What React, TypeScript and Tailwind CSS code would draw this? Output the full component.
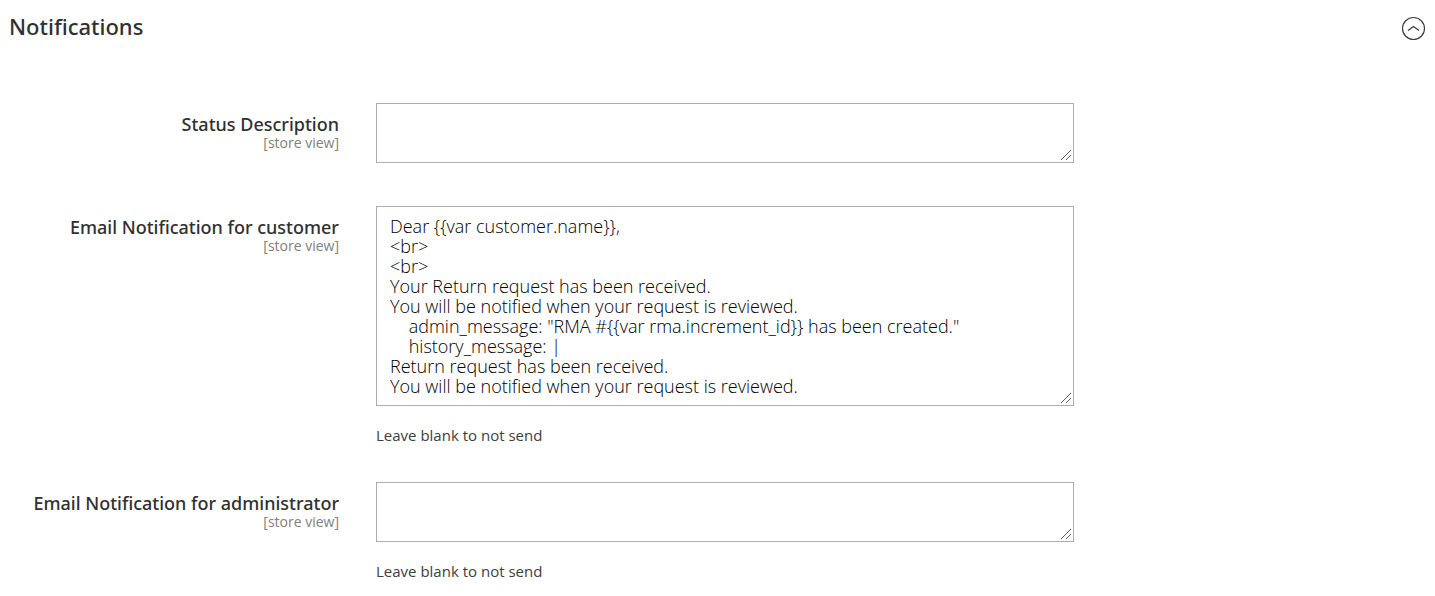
const customerMessage = `Dear {{var customer.name}},
<br>
<br>
Your Return request has been received.
You will be notified when your request is reviewed.
    admin_message: "RMA #{{var rma.increment_id}} has been created."
    history_message: |
Return request has been received.
You will be notified when your request is reviewed.`;

type FieldProps = {
  id: string;
  label: string;
  rows: number;
  value?: string;
  note?: string;
};

function Field({ id, label, rows, value = "", note }: FieldProps) {
  return (
    <div className="flex gap-[37px]">
      <label htmlFor={id} className="w-[339px] shrink-0 pt-[11px] text-right">
        <span className="block font-['Noto_Sans','Open_Sans',sans-serif] text-[18px] leading-5 font-medium">{label}</span>
        <span className="block text-sm leading-[17px] text-[#808080]">[store view]</span>
      </label>
      <div className="min-w-0 max-w-[698px] grow">
        <div className="relative">
          <textarea
            id={id}
            rows={rows}
            defaultValue={value}
            className="block w-full resize-none overflow-hidden border border-[#adadad] bg-white px-[13px] py-[9px] text-[18px] leading-5 font-light text-black outline-none"
          />
          <svg
            aria-hidden="true"
            className="pointer-events-none absolute right-[2px] bottom-[2px]"
            width="12"
            height="12"
            viewBox="0 0 12 12"
            stroke="#5c5c5c"
            strokeWidth="1"
          >
            <path d="M1 11 L11 1 M6 11 L11 6" />
          </svg>
        </div>
        {note && <p className="mt-[19px] text-[15px] leading-5 text-[#404040]">{note}</p>}
      </div>
    </div>
  );
}

export default function App() {
  return (
    <section className="bg-white pb-4 font-['Open_Sans',sans-serif] text-[#303030]">
      <header className="flex items-start justify-between pt-[10px] pr-[9px] pl-[9px]">
        <h2 className="font-['Noto_Sans','Open_Sans',sans-serif] text-[22px] leading-8 font-medium">Notifications</h2>
        <button type="button" aria-label="Collapse Notifications" className="mt-[6px]">
          <svg width="25" height="25" viewBox="0 0 25 25" fill="none" stroke="#404040" strokeWidth="1.2">
            <circle cx="12.5" cy="12.5" r="11" />
            <path d="M7 14.6 L12.5 10.4 L18 14.6" />
          </svg>
        </button>
      </header>
      <form className="mt-[61px] flex flex-col">
        <Field id="status" label="Status Description" rows={2} />
        <div className="mt-[43px]">
          <Field id="customer" label="Email Notification for customer" rows={9} value={customerMessage} note="Leave blank to not send" />
        </div>
        <div className="mt-[37px]">
          <Field id="admin" label="Email Notification for administrator" rows={2} note="Leave blank to not send" />
        </div>
      </form>
    </section>
  );
}
